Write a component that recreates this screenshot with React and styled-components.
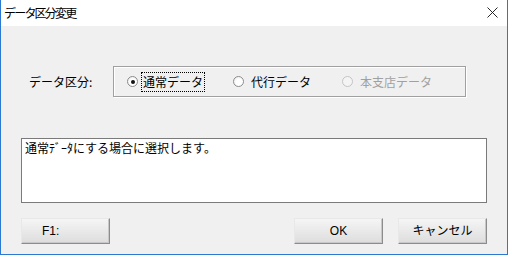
import React from 'react';
import styled, { createGlobalStyle } from 'styled-components';

const GlobalStyle = createGlobalStyle`
	html, body {
		margin: 0;
		padding: 0;
		background: #ffffff;
	}
	body {
		font-family: "Noto Sans CJK JP", "Liberation Sans", sans-serif;
		font-size: 12px;
		color: #000;
	}
`;

const Window = styled.div`
	width: 508px;
	height: 255px;
	box-sizing: border-box;
	border: 1px solid #2b79d0;
	border-top: none;
	display: flex;
	flex-direction: column;
	background: #f0f0f0;
`;

const TitleBar = styled.div`
	height: 26px;
	flex: none;
	background: #fff;
	display: flex;
	align-items: center;
	justify-content: space-between;
	padding: 0 9px 0 3px;
`;

const Title = styled.span`
	font-size: 12px;
	letter-spacing: -1.8px;
	line-height: 1;
	margin-top: -1px;
`;

const CloseIcon = () => (
	<svg width="11" height="11" viewBox="0 0 11 11" style={{ display: 'block', marginTop: -1 }}>
		<path d="M0.5 0.5 L10.5 10.5 M10.5 0.5 L0.5 10.5" stroke="#111" strokeWidth="0.9" />
	</svg>
);

const Client = styled.div`
	flex: 1;
	display: flex;
	flex-direction: column;
	padding: 40px 20px 0 20px;
`;

const KindRow = styled.div`
	display: flex;
	align-items: center;
	height: 31px;
`;

const Label = styled.span`
	width: 84px;
	padding-left: 8px;
	line-height: 1;
`;

const GroupBox = styled.div`
	width: 353px;
	height: 31px;
	box-sizing: border-box;
	border: 1px solid #a0a0a0;
	box-shadow: inset 1px 1px 0 #fff, 1px 1px 0 #fff;
	display: flex;
	align-items: center;
	padding-left: 13px;
`;

const RadioItem = styled.label`
	display: flex;
	align-items: center;
	width: ${p => p.$w || 'auto'};
	color: ${p => (p.$disabled ? '#a0a0a0' : '#000')};
`;

const Circle = styled.span`
	width: 11px;
	height: 11px;
	box-sizing: border-box;
	border-radius: 50%;
	border: 1px solid ${p => (p.$disabled ? '#c4c4c4' : '#8c8c8c')};
	background: ${p => (p.$disabled ? '#f4f4f4' : 'radial-gradient(circle at 60% 60%, #ffffff 40%, #e6e6e6 100%)')};
	display: flex;
	align-items: center;
	justify-content: center;
	margin-right: ${p => (p.$focus ? '3px' : '5px')};
	&::after {
		content: '';
		display: ${p => (p.$checked ? 'block' : 'none')};
		width: 4px;
		height: 4px;
		border-radius: 50%;
		background: #111;
	}
`;

const RadioText = styled.span`
	line-height: 1;
	padding: 3px 1px;
	border: 1px dotted ${p => (p.$focus ? '#000' : 'transparent')};
`;

const Description = styled.div`
	margin-top: 41px;
	width: 466px;
	height: 65px;
	box-sizing: border-box;
	border: 1px solid #7a7a7a;
	background: #fff;
	padding: 2px 3px;
	line-height: 14px;
`;

const ButtonRow = styled.div`
	display: flex;
	margin-top: 15px;
	gap: 15px;
`;

const Button = styled.button`
	width: 89px;
	height: 26px;
	box-sizing: border-box;
	font-family: "Liberation Sans", "Noto Sans CJK JP", sans-serif;
	font-weight: 400;
	font-size: 12px;
	color: #000;
	padding: ${p => (p.$left ? '0 0 0 20px' : '0')};
	text-align: ${p => (p.$left ? 'left' : 'center')};
	background: linear-gradient(to bottom, #f5f5f5, #dddddd);
	border: 1px solid;
	border-color: #e8e8e8 #8c8c8c #8c8c8c #e8e8e8;
	box-shadow: inset -1px -1px 0 #c8c8c8;
	margin-right: ${p => (p.$push ? 'auto' : '0')};
	line-height: 1;
`;

const radios = [
	{ text: '通常データ', checked: true, focus: true, width: '106px' },
	{ text: '代行データ', width: '109px' },
	{ text: '本支店データ', disabled: true },
];

export default function App() {
	return (
		<>
			<GlobalStyle />
			<Window>
				<TitleBar>
					<Title>データ区分変更</Title>
					<CloseIcon />
				</TitleBar>
				<Client>
					<KindRow>
						<Label>データ区分:</Label>
						<GroupBox>
							{radios.map(r => (
								<RadioItem key={r.text} $w={r.width} $disabled={r.disabled}>
									<Circle $checked={r.checked} $disabled={r.disabled} $focus={r.focus} />
									<RadioText $focus={r.focus}>{r.text}</RadioText>
								</RadioItem>
							))}
						</GroupBox>
					</KindRow>
					<Description>通常ﾃﾞｰﾀにする場合に選択します。</Description>
					<ButtonRow>
						<Button $left $push>F1:</Button>
						<Button>OK</Button>
						<Button>キャンセル</Button>
					</ButtonRow>
				</Client>
			</Window>
		</>
	);
}
